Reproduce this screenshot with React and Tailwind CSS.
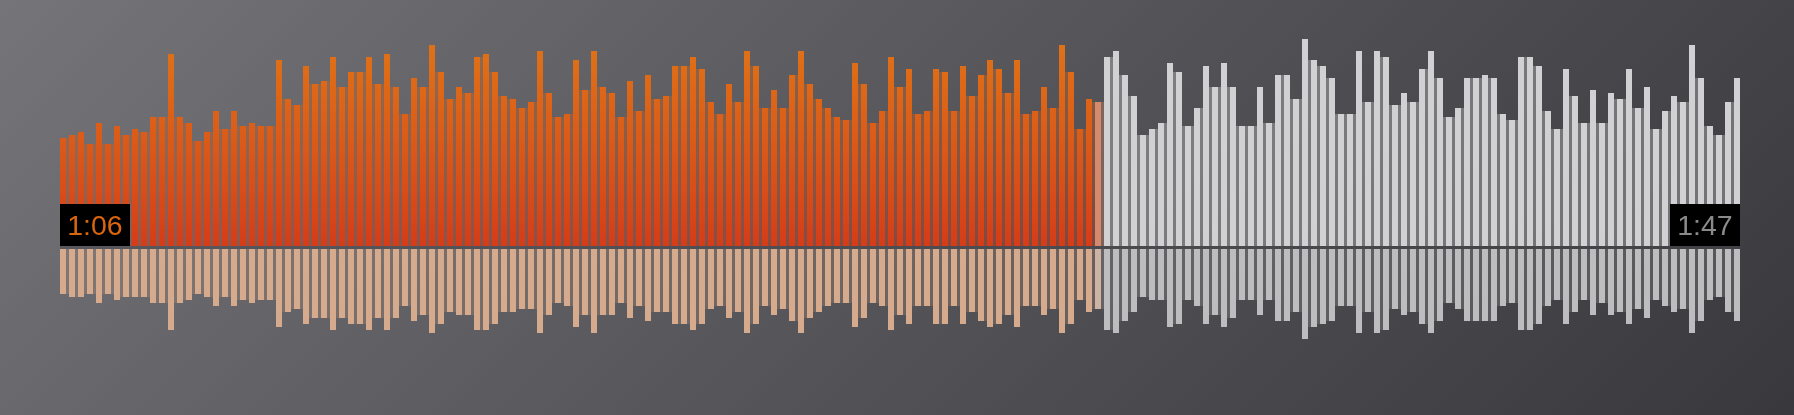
import React from 'react';

// Bar heights in units of 3px, read off the waveform
const top = [36,37,38,34,41,34,40,37,39,38,43,43,64,43,41,35,38,45,39,45,40,41,40,40,62,49,47,60,54,55,63,53,58,58,63,54,64,53,44,56,53,67,58,49,53,51,63,64,58,50,49,46,48,65,51,43,44,62,52,65,53,51,43,55,45,57,49,50,60,60,63,59,48,44,54,48,65,60,46,52,46,57,65,54,49,46,43,42,61,54,41,45,63,53,59,44,45,59,58,45,60,50,57,62,59,51,62,44,45,53,46,67,58,39,49,48,63,65,57,50,37,39,41,61,58,40,46,60,53,61,53,40,40,53,41,57,57,49,69,62,60,56,44,44,65,48,65,63,47,51,48,59,65,56,43,46,56,56,57,56,44,42,63,63,60,45,39,59,50,41,52,41,51,49,59,46,53,39,45,50,48,67,56,40,37,48,56];
const bottom = [15,16,16,15,18,15,17,16,16,16,18,18,27,18,17,15,16,19,16,19,17,18,17,17,26,21,20,25,23,23,27,23,25,25,27,23,27,23,19,24,22,28,25,21,22,22,27,27,25,21,21,20,20,28,22,18,19,26,22,28,22,22,18,23,19,24,21,21,25,25,27,25,20,19,23,21,28,25,19,22,20,24,28,23,21,19,18,18,26,23,18,19,27,22,25,19,19,25,25,19,25,21,24,26,25,22,26,19,19,22,20,28,25,17,21,20,27,28,24,21,16,17,17,26,25,17,19,25,22,26,23,17,17,22,17,24,24,21,30,26,25,24,19,19,28,21,28,27,20,22,21,25,28,24,18,20,24,24,24,24,19,18,27,27,25,19,17,25,21,17,22,18,22,21,25,20,23,17,19,21,20,28,24,17,16,21,24];

const PLAYED = 115;

const upperColor = (i) => {
    if (i < PLAYED) return 'bg-linear-to-b from-[#df7317] to-[#d53c18] bg-bottom bg-no-repeat bg-size-[6px_207px]';
    if (i === PLAYED) return 'bg-[#d58a6e]';
    return 'bg-[#d1d1d3]';
};

const lowerColor = (i) => {
    if (i < PLAYED) return 'bg-[#d6aa8d]';
    if (i === PLAYED) return 'bg-[#cdb3a3]';
    return 'bg-[#bdbdc0]';
};

// One bar plus the washed out gap that runs up to the shorter neighbour
const Bars = ({ heights, color, align, gapOpacity }) => (
    <div className={`flex ${align}`}>
        {heights.map((h, i) => (
            <React.Fragment key={i}>
                <div className={`w-[6px] ${color(i)}`} style={{ height: h * 3 }}></div>
                {i < heights.length - 1 && (
                    <div
                        className={`w-[3px] ${gapOpacity} ${color(i)}`}
                        style={{ height: Math.min(h, heights[i + 1]) * 3 }}
                    ></div>
                )}
            </React.Fragment>
        ))}
    </div>
);

const App = () => {
    return (
        <div className="w-[1794px] h-[415px] overflow-hidden bg-linear-135 from-[#747479] to-[#38383d] pt-[45px] pl-[60px] font-['Liberation_Sans',sans-serif]">
            <div className="relative w-[1680px] blur-[0.5px]">
                {/* Upper bars */}
                <div className="h-[201px] flex flex-col justify-end">
                    <Bars heights={top} color={upperColor} align="items-end" gapOpacity="opacity-35" />
                </div>

                {/* Divider */}
                <div className="h-[3px] bg-[#45454a]/50"></div>

                {/* Lower bars */}
                <Bars heights={bottom} color={lowerColor} align="items-start" gapOpacity="opacity-20" />

                {/* Time badges */}
                <div className="absolute left-0 top-[159px] w-[70px] h-[42px] bg-black flex items-center justify-center text-[28.5px] text-[#d9650f]">1:06</div>
                <div className="absolute right-0 top-[159px] w-[70px] h-[42px] bg-black flex items-center justify-center text-[28.5px] text-[#8a8a8a]">1:47</div>
            </div>
        </div>
    );
};

export default App;
